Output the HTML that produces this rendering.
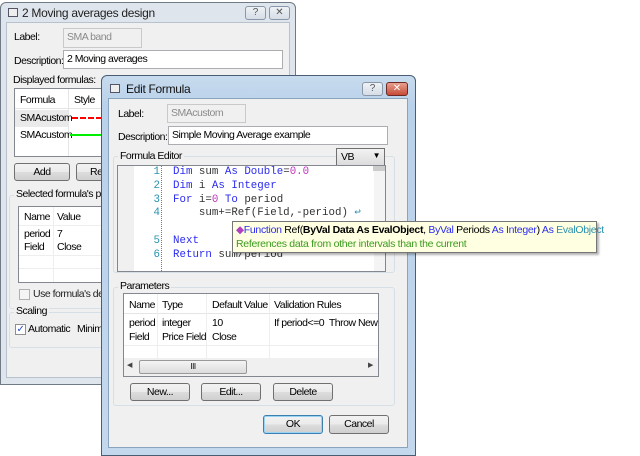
<!DOCTYPE html>
<html><head><style>
*{box-sizing:border-box;margin:0;padding:0}
body{width:640px;height:456px;background:#fff;position:relative;overflow:hidden;font-family:"Liberation Sans",sans-serif;font-size:10.5px;letter-spacing:-0.5px;color:#000}
.a{position:absolute;white-space:nowrap}
.inp{position:absolute;background:#fff;border:1px solid #abadb3;padding:2px 3px}
.dis{background:#f0f0f0;color:#8a8a8a;border-color:#c9c9c9}
.btn{position:absolute;border:1px solid #707070;border-radius:3px;background:linear-gradient(#f2f2f2,#ebebeb 50%,#dddddd 51%,#cfcfcf);text-align:center;line-height:16px}
.grp{position:absolute;border:1px solid #d5dfe5;border-radius:3px}
.lbl{position:absolute;background:#f0f0f0;padding:0 2px}
.code{position:absolute;font-family:"Liberation Mono",monospace;font-size:10.8px;letter-spacing:0;white-space:pre;color:#333;line-height:13.8px}
.k{color:#2b2bf0}.n{color:#c030c0}.ln{color:#2b91af}
.tb{position:absolute;width:21px;height:14px;border:1px solid #8a97a8;border-radius:3px;background:linear-gradient(#eef2f6,#d6dde6);font-size:10px;text-align:center;line-height:12px;color:#555;letter-spacing:0}
</style></head><body>

<!-- main window -->
<div class="a" style="left:0;top:2px;width:296px;height:383px;background:#dfe5ec;border:1px solid #6f7a86;border-radius:6px 6px 0 0"></div>
<div class="a" style="left:8px;top:8px;width:10px;height:9px;border:1px solid #556;background:#eee"></div>
<div class="a" style="left:22px;top:6px;font-size:12px;color:#222;letter-spacing:-0.3px">2 Moving averages design</div>
<div class="tb" style="left:245px;top:6px">?</div>
<div class="tb" style="left:269px;top:6px">✕</div>
<div class="a" style="left:6px;top:22px;width:284px;height:356px;background:#f0f0f0;border:1px solid #b8c2cc"></div>
<div class="a" style="left:14px;top:31px">Label:</div>
<div class="inp dis" style="left:63px;top:28px;width:79px;height:20px">SMA band</div>
<div class="a" style="left:14px;top:55px">Description:</div>
<div class="inp" style="left:63px;top:50px;width:220px;height:19px">2 Moving averages</div>
<div class="a" style="left:13px;top:74px">Displayed formulas:</div>
<div class="a" style="left:14px;top:88px;width:100px;height:69px;background:#fff;border:1px solid #828790"></div>
<div class="a" style="left:15px;top:89px;width:100px;height:20px;border-bottom:1px solid #e5e5e5"></div>
<div class="a" style="left:68px;top:89px;width:1px;height:67px;background:#e5e5e5"></div>
<div class="a" style="left:20px;top:94px">Formula</div>
<div class="a" style="left:74px;top:94px">Style</div>
<div class="a" style="left:15px;top:110px;width:53px;height:17px;background:#eaeaea"></div>
<div class="a" style="left:20px;top:112px">SMAcustom</div>
<div class="a" style="left:72px;top:117px;width:30px;border-top:2px dashed #f00"></div>
<div class="a" style="left:20px;top:129px">SMAcustom</div>
<div class="a" style="left:70px;top:134px;width:32px;height:2px;background:#0e0"></div>
<div class="btn" style="left:14px;top:163px;width:56px;height:18px">Add</div>
<div class="btn" style="left:76px;top:163px;width:40px;height:18px;text-align:left;padding-left:13px">Re</div>
<div class="grp" style="left:9px;top:195px;width:120px;height:114px"></div>
<div class="lbl" style="left:14px;top:188px">Selected formula's par</div>
<div class="a" style="left:18px;top:206px;width:90px;height:77px;background:#fff;border:1px solid #828790"></div>
<div class="a" style="left:24px;top:211px">Name</div><div class="a" style="left:57px;top:211px">Value</div>
<div class="a" style="left:53px;top:207px;width:1px;height:75px;background:#eee"></div>
<div class="a" style="left:19px;top:225px;width:89px;height:1px;background:#eee"></div>
<div class="a" style="left:24px;top:228px">period</div><div class="a" style="left:57px;top:228px">7</div>
<div class="a" style="left:24px;top:241px">Field</div><div class="a" style="left:57px;top:241px">Close</div>
<div class="a" style="left:19px;top:255px;width:89px;height:1px;background:#eee"></div>
<div class="a" style="left:19px;top:268px;width:89px;height:1px;background:#eee"></div>
<div class="a" style="left:19px;top:289px;width:11px;height:11px;border:1px solid #b0b0b0;background:#f4f4f4"></div>
<div class="a" style="left:33px;top:288px;color:#222">Use formula's defa</div>
<div class="grp" style="left:9px;top:312px;width:120px;height:36px"></div>
<div class="lbl" style="left:14px;top:305px">Scaling</div>
<div class="a" style="left:15px;top:324px;width:11px;height:11px;border:1px solid #8f8f8f;background:#fff;color:#2a4fbf;font-size:10px;line-height:9px;text-align:center">✓</div>
<div class="a" style="left:28px;top:323px">Automatic</div>
<div class="a" style="left:77px;top:323px">Minimu</div>

<!-- edit formula window -->
<div class="a" style="left:101px;top:75px;width:315px;height:381px;background:linear-gradient(#c8dbee,#b9d1ea 30px,#c4d8ed);border:1px solid #4a5d75;border-radius:6px 6px 0 0"></div>
<div class="a" style="left:110px;top:84px;width:10px;height:9px;border:1px solid #556;background:#eee"></div>
<div class="a" style="left:126px;top:82px;font-size:12px;color:#111;letter-spacing:-0.3px">Edit Formula</div>
<div class="tb" style="left:362px;top:82px">?</div>
<div class="tb" style="left:386px;top:82px;background:linear-gradient(#e8a090,#c74a38);border-color:#6d2a22;color:#fff;width:22px">✕</div>
<div class="a" style="left:108px;top:98px;width:300px;height:350px;background:#f0f0f0;border:1px solid #8aa3bf"></div>
<div class="a" style="left:118px;top:108px">Label:</div>
<div class="inp dis" style="left:167px;top:104px;width:79px;height:19px">SMAcustom</div>
<div class="a" style="left:118px;top:131px">Description:</div>
<div class="inp" style="left:168px;top:126px;width:220px;height:19px">Simple Moving Average example</div>
<div class="grp" style="left:113px;top:156px;width:282px;height:117px"></div>
<div class="lbl" style="left:118px;top:150px">Formula Editor</div>
<div class="a" style="left:336px;top:148px;width:49px;height:18px;border:1px solid #707070;background:linear-gradient(#f2f2f2,#dcdcdc);padding:2px 4px">VB<span style="position:absolute;right:4px;top:2px;font-size:8px">▼</span></div>
<div class="a" style="left:117px;top:165px;width:269px;height:107px;background:#fff;border:1px solid #828790"></div>
<div class="a" style="left:118px;top:166px;width:16px;height:105px;background:#f0f0f0"></div>
<div class="a" style="left:161px;top:166px;width:0;height:105px;border-left:1px dotted #2b91af"></div>
<div class="a" style="left:374px;top:166px;width:11px;height:105px;background:#f4f4f4"></div>
<div class="a" style="left:373px;top:166px;width:12px;height:5px;background:#ccc"></div>
<div class="code ln" style="left:150px;top:166px;text-align:right;width:10px">1
2
3
4

5
6</div>
<div class="code" style="left:173px;top:166px"><span class="k">Dim</span> sum <span class="k">As</span> <span class="k">Double</span>=<span class="n">0.0</span>
<span class="k">Dim</span> i <span class="k">As</span> <span class="k">Integer</span>
<span class="k">For</span> i=<span class="n">0</span> <span class="k">To</span> period
    sum+=Ref(Field,-period) <span style="color:#2b91af">↩</span>

<span class="k">Next</span>
<span class="k">Return</span> sum/period</div>
<div class="a" style="left:232px;top:221px;width:365px;height:32px;background:#ffffe1;border:1px solid #767676;box-shadow:2px 2px 2px rgba(0,0,0,.3);padding:1px 3px;line-height:14px;letter-spacing:-0.3px"><span style="color:#b040c0">◆</span><span class="k">Function</span> Ref(<b>ByVal Data As EvalObject</b>, <span class="k">ByVal</span> Periods <span class="k">As Integer</span>) <span class="k">As</span> <span style="color:#2b91af">EvalObject</span><br><span style="color:#3a9a20">References data from other intervals than the current</span></div>

<div class="grp" style="left:113px;top:287px;width:282px;height:119px"></div>
<div class="lbl" style="left:118px;top:280px">Parameters</div>
<div class="a" style="left:123px;top:293px;width:256px;height:84px;background:#fff;border:1px solid #828790;overflow:hidden">
 <div class="a" style="left:0;top:0;width:256px;height:20px;border-bottom:1px solid #e5e5e5"></div>
 <div class="a" style="left:33px;top:0;width:1px;height:66px;background:#eee"></div>
 <div class="a" style="left:82px;top:0;width:1px;height:66px;background:#eee"></div>
 <div class="a" style="left:145px;top:0;width:1px;height:66px;background:#eee"></div>
 <div class="a" style="left:5px;top:5px">Name</div><div class="a" style="left:38px;top:5px">Type</div><div class="a" style="left:88px;top:5px">Default Value</div><div class="a" style="left:150px;top:5px">Validation Rules</div>
 <div class="a" style="left:5px;top:23px">period</div><div class="a" style="left:38px;top:23px">integer</div><div class="a" style="left:88px;top:23px">10</div><div class="a" style="left:150px;top:23px">If period&lt;=0&nbsp;&nbsp;Throw New A</div>
 <div class="a" style="left:5px;top:37px">Field</div><div class="a" style="left:38px;top:37px">Price Field</div><div class="a" style="left:88px;top:37px">Close</div>
 <div class="a" style="left:0;top:51px;width:256px;height:1px;background:#eee"></div>
 <div class="a" style="left:0;top:64px;width:256px;height:18px;background:#f0f0f0"></div>
 <div class="a" style="left:3px;top:67px;font-size:7px;color:#444">◀</div>
 <div class="a" style="left:15px;top:66px;width:108px;height:14px;border:1px solid #999;border-radius:2px;background:linear-gradient(#f4f4f4,#dcdcdc);text-align:center;font-size:8px;line-height:11px">III</div>
 <div class="a" style="left:244px;top:67px;font-size:7px;color:#444">▶</div>
</div>
<div class="btn" style="left:130px;top:383px;width:60px;height:18px">New...</div>
<div class="btn" style="left:201px;top:383px;width:60px;height:18px">Edit...</div>
<div class="btn" style="left:273px;top:383px;width:60px;height:18px">Delete</div>
<div class="btn" style="left:263px;top:415px;width:60px;height:19px;border-color:#3c7fb1;box-shadow:inset 0 0 0 1px #9ad4f5">OK</div>
<div class="btn" style="left:329px;top:415px;width:60px;height:19px">Cancel</div>
</body></html>
